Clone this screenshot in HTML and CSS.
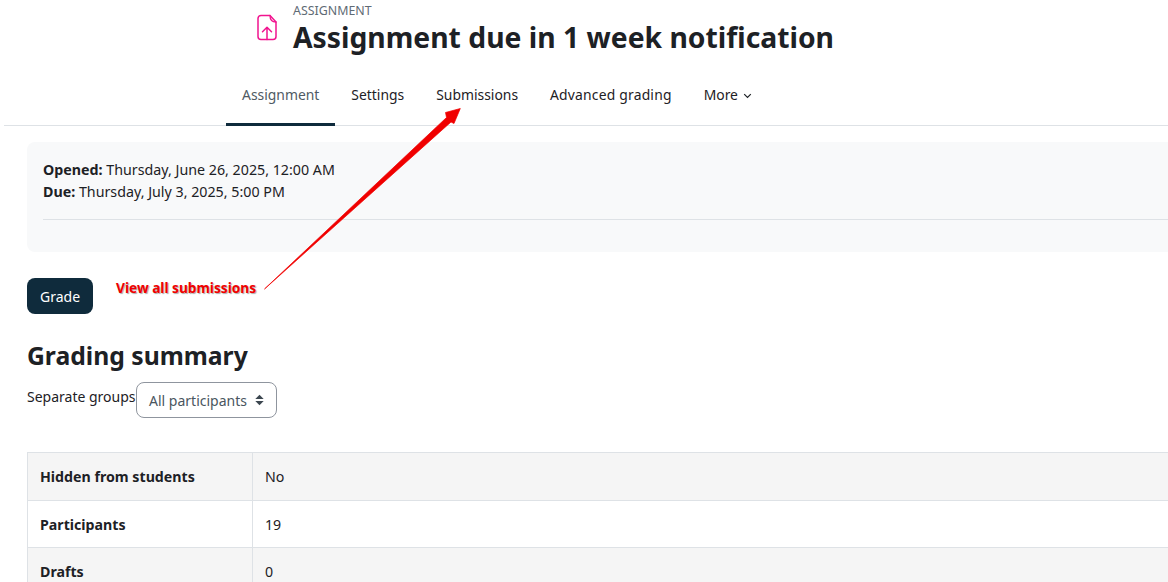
FILE: index.html
```html
<!DOCTYPE html>
<html lang="en">
<head>
<meta charset="utf-8">
<title>Assignment due in 1 week notification</title>
<link rel="stylesheet" href="styles.css">
</head>
<body>
<div class="page">
  <header class="head">
    <svg class="modicon" width="22" height="28" viewBox="0 0 22 28" fill="none" stroke="#f1148f" stroke-width="1.5" stroke-linecap="round" stroke-linejoin="round">
      <path d="M14 1.500H5a3 3 0 0 0-3 3v18a3 3 0 0 0 3 3h12a3 3 0 0 0 3-3V8z"/>
      <path d="M14 1.500c0 4 1.500 6.500 6 6.500" stroke-width="1.300"/>
      <path d="M11 25.500V13.500M6.500 17.800 11 13.300l4.500 4.500"/>
    </svg>
    <div class="titles">
      <div class="kicker">ASSIGNMENT</div>
      <h1 class="title">Assignment due in 1 week notification</h1>
    </div>
  </header>
  <nav class="tabs">
    <a class="tab active">Assignment</a>
    <a class="tab">Settings</a>
    <a class="tab">Submissions</a>
    <a class="tab tab-wide">Advanced grading</a>
    <a class="tab">More <svg class="caret" width="9" height="6" viewBox="0 0 8 6" fill="none" stroke="#1d2125" stroke-width="1.200"><path d="M.7 1.200 4 4.500l3.300-3.300"/></svg></a>
  </nav>
  <main class="main">
    <section class="dates">
      <div class="dateline"><strong>Opened:</strong> Thursday, June 26, 2025, 12:00 AM</div>
      <div class="dateline"><strong>Due:</strong> Thursday, July 3, 2025, 5:00 PM</div>
      <hr class="rule">
    </section>
    <button class="grade">Grade</button>
    <h2 class="summary">Grading summary</h2>
    <div class="groups">
      <span class="groups-label">Separate groups</span>
      <div class="select">All participants
        <svg class="updown" width="9" height="12" viewBox="0 0 9 12" fill="#3c4750"><path d="M4.500 .8 8.700 5H.3zM4.500 11.200.3 7h8.400z"/></svg>
      </div>
    </div>
    <table class="grid">
      <tr class="odd"><th>Hidden from students</th><td>No</td></tr>
      <tr><th>Participants</th><td>19</td></tr>
      <tr class="odd"><th>Drafts</th><td>0</td></tr>
    </table>
  </main>
  <div class="note">View all submissions</div>
  <svg class="arrow" width="1168" height="582" viewBox="0 0 1168 582">
    <path fill="#f00000" stroke="#f00000" stroke-width=".7" stroke-linejoin="round" d="M264.500 289 446.500 117.500 445.500 112.500 460.300 108.500 454 123.500 451 122Z"/>
  </svg>
</div>
</body>
</html>
```
FILE: styles.css
```css
* { box-sizing: border-box; }
html, body { margin: 0; padding: 0; height: 582px; overflow: hidden; background: #fff; }
body { font-family: "Noto Sans", "Open Sans", sans-serif; font-size: 14.2px; color: #1d2125; }
.page { position: relative; width: 1168px; height: 582px; overflow: hidden; }

.head { display: flex; height: 73px; padding-left: 256px; }
.modicon { margin-top: 14px; margin-right: 15px; flex: none; }
.kicker { font-size: 12.4px; line-height: 16px; margin-top: 3px; color: #5f6b75; }
.title { margin: -1px 0 0; font-size: 28.3px; line-height: 38px; font-weight: 700; }

.tabs { display: flex; margin-left: 4px; padding-left: 222px; height: 53px; border-bottom: 1px solid #dee2e6; font-size: 13.9px; }
.tab { display: block; padding: 12px 16px 0; line-height: 20px; height: 53px; white-space: nowrap; }
.tab.active { color: #4f5a63; border-bottom: 3px solid #0f2b3c; }
.tab-wide { letter-spacing: .19px; }
.caret { vertical-align: 1px; margin-left: 1px; }

.main { width: 1300px; margin-left: 27px; }
.dates { margin-top: 16px; height: 110px; padding: 17px 16px 16px; background: #f8f9fa; border-radius: 8px; }
.dateline { line-height: 22px; font-size: 14.25px; }
.rule { margin: 16px 0 0; border: 0; border-top: 1px solid #dee2e6; }
.grade { display: block; margin-top: 26px; width: 66px; height: 36px; padding: 0; border: 0; border-radius: 8px; background: #0f2b3c; color: #fff; font: inherit; font-size: 14px; }
.summary { margin: 25px 0 0; font-size: 24.7px; line-height: 33px; font-weight: 700; }
.groups { display: flex; margin-top: 10px; height: 36px; font-size: 14px; }
.groups-label { line-height: 20px; padding-top: 5px; }
.select { display: flex; align-items: center; width: 141px; height: 36px; padding-left: 12.5px; border: 1px solid #8f959e; border-radius: 8px; color: #4a5660; white-space: nowrap; }
.updown { margin-left: 8px; }

.grid { margin-top: 34px; width: 100%; border-collapse: collapse; table-layout: fixed; }
.grid th, .grid td { border: 1px solid #dee2e6; padding: 2px 12px 0; height: 47.500px; text-align: left; line-height: 20px; }
.grid th { width: 225px; font-weight: 700; }
.grid td { font-weight: 400; }
.odd { background: #f5f5f5; }

.note { position: absolute; left: 116px; top: 279px; font-size: 13.7px; line-height: 18px; font-weight: 700; color: #f00000; white-space: nowrap; text-shadow: 1px 1px 1px #aaa, -1px -1px 1px #fff; }
.arrow { position: absolute; left: 0; top: 0; pointer-events: none; }
```
